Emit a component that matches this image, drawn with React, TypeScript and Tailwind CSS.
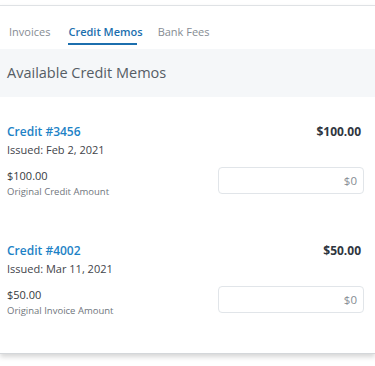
const credits = [
  { id: "3456", issued: "Feb 2, 2021", amount: "$100.00", label: "Original Credit Amount" },
  { id: "4002", issued: "Mar 11, 2021", amount: "$50.00", label: "Original Invoice Amount" },
];

function CreditRow({ c }: { c: (typeof credits)[number] }) {
  return (
    <div className="pl-[7px] pr-[11px]">
      <div className="flex justify-between items-center h-[20px] pr-[3px]">
        <span className="text-[12px] font-semibold text-[#1d82c6]">Credit #{c.id}</span>
        <span className="text-[12px] font-bold text-[#2f3640]">{c.amount}</span>
      </div>
      <div className="-mt-[1px] text-[11px] text-[#3f444a] leading-[18px]">Issued: {c.issued}</div>
      <div className="flex justify-between items-start mt-[8px]">
        <div>
          <div className="text-[11px] text-[#363b42] leading-[17px]">{c.amount}</div>
          <div className="text-[9.5px] text-[#70767d] leading-[16px]">{c.label}</div>
        </div>
        <div className="w-[146px] h-[27px] border border-[#e1e5e9] rounded-[4px] flex items-center justify-end pr-[6px] text-[11.5px] text-[#868c93]">
          $0
        </div>
      </div>
    </div>
  );
}

export default function App() {
  return (
    <div className="w-[375px] h-[366px] bg-white" style={{ fontFamily: '"Open Sans", sans-serif' }}>
      <div className="h-[5px]" />
      <div className="border-t border-[#dfe2e5] shadow-[0_3px_5px_rgba(0,0,0,0.16)] border-b border-b-[#d4d7da]">
        <div className="flex pt-[18px] pb-[4px] pl-[9px] gap-[18px] text-[11px] leading-[16px]">
          <span className="text-[#868c93]">Invoices</span>
          <div className="flex flex-col">
            <span className="font-semibold text-[#1c6fae]">Credit Memos</span>
            <div className="mt-[3px] h-[2px] w-[69px] bg-[#1c6fae]" />
          </div>
          <span className="-ml-[3px] text-[#868c93]">Bank Fees</span>
        </div>
        <div className="bg-[#f5f7f9] h-[48px] flex items-center pl-[7px] text-[14.5px] text-[#565d65]">
          Available Credit Memos
        </div>
        <div className="pt-[25px] pb-[34px] flex flex-col gap-[41px]">
          {credits.map((c) => (
            <CreditRow key={c.id} c={c} />
          ))}
        </div>
      </div>
    </div>
  );
}
